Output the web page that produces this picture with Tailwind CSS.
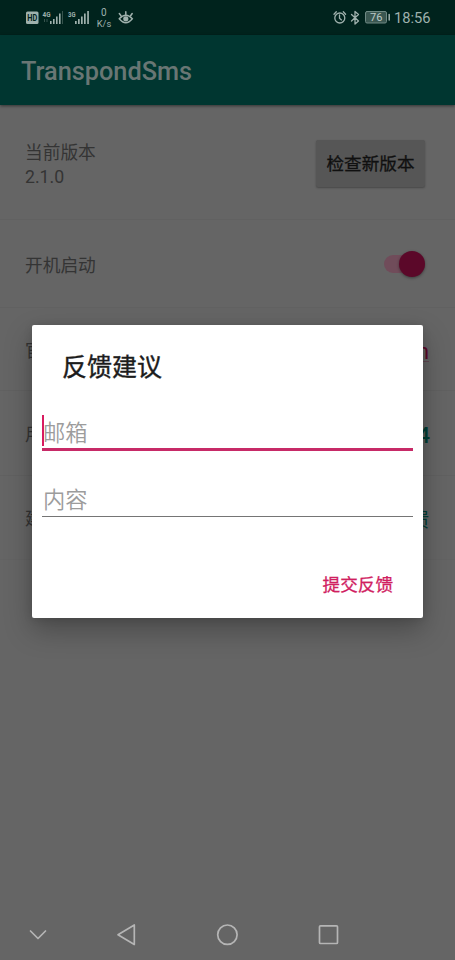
<!DOCTYPE html>
<html lang="zh-CN">
<head>
<meta charset="utf-8">
<title>TranspondSms</title>
<script src="https://cdn.jsdelivr.net/npm/@tailwindcss/browser@4"></script>
</head>
<body class="bg-[#656565]">
<div class="relative flex h-[960px] w-[455px] flex-col overflow-hidden bg-[#656565] font-['Roboto','Noto_Sans_CJK_SC',sans-serif] text-[#343434]">
  <!-- Status bar -->
  <div class="flex h-[35px] shrink-0 items-center justify-between bg-[#00231d] pr-6 pl-[26px] text-[#9fb1ad]">
    <div class="flex h-full items-center">
      <svg class="h-[35px] w-[110px]" viewBox="26 0 110 35" fill="currentColor">
        <rect x="26" y="11.500" width="12.500" height="12.500" rx="1.500"/>
        <text x="27.300" y="21" font-size="8.500" font-weight="700" fill="#00231d" textLength="10" lengthAdjust="spacingAndGlyphs">HD</text>
        <text x="42.500" y="16.500" font-size="7.500" font-weight="700" textLength="8" lengthAdjust="spacingAndGlyphs">4G</text>
        <path d="M50 21h1.600v3H50zM53 19h1.600v5H53zM56 16.500h1.600V24H56zM59 13.500h1.600V24H59z"/>
        <path d="M62 11h1v13h-1zM44 19h1v3h-1zM46.500 19h1v3h-1z" opacity=".35"/>
        <text x="68" y="16.500" font-size="7.500" font-weight="700" textLength="7.500" lengthAdjust="spacingAndGlyphs">3G</text>
        <path d="M75 21h1.700v3H75zM78 19h1.700v5H78zM81 16.500h1.700V24H81zM84 13.500h1.700V24H84zM87.200 11h1.700v13h-1.700z"/>
        <text x="103.700" y="15.500" font-size="10" text-anchor="middle">0</text>
        <text x="96.700" y="26.800" font-size="9.800" textLength="14.500" lengthAdjust="spacingAndGlyphs">K/s</text>
        <g fill="none" stroke="currentColor" stroke-width="1.500" stroke-linecap="round">
          <path d="M119.300 18.800q6.500-7 13 0q-6.500 8-13 0z"/>
          <path d="M125.800 14.500v-2.800M121 15.800l-1.700-2.300M130.600 15.800l1.600-2.300"/>
        </g>
        <circle cx="125.800" cy="18.800" r="2.600"/>
      </svg>
    </div>
    <div class="flex h-full items-center">
      <svg class="h-[35px] w-[58px]" viewBox="333 0 58 35" fill="none" stroke="currentColor" stroke-width="1.300" stroke-linecap="round">
        <circle cx="339.800" cy="18" r="5"/>
        <path d="M339.500 15v3.300l2 1.600M334 14.300l2.300-2.500M345.600 14.300l-2.300-2.500"/>
        <path d="M351.500 14.500l7 6.500-3.500 3V11.500l3.500 3-7 6.500" stroke-linejoin="round"/>
        <rect x="365.500" y="11.500" width="21" height="11.500" rx="1.500" fill="#3a5751" stroke="#6f8984" stroke-width="1"/>
        <path d="M389.200 14.500v5.500" stroke-width="1.500"/>
        <text x="370" y="21.300" font-size="11" fill="#bccac7" stroke="none" textLength="12.500" lengthAdjust="spacingAndGlyphs">76</text>
      </svg>
      <span class="ml-[3px] w-[37px] pt-px text-[14.7px] leading-[35px] whitespace-nowrap">18:56</span>
    </div>
  </div>
  <!-- Toolbar -->
  <header class="z-[1] flex h-[70px] shrink-0 items-center bg-[#003630] pt-[3px] pl-[21px] text-[25.3px] font-medium text-[#697674] shadow-[0_1px_3px_rgba(0,0,0,.5)]">TranspondSms</header>
  <!-- Settings -->
  <main class="flex flex-col text-[17.7px]">
    <section class="flex h-[115px] items-center justify-between border-b border-[#616161] pr-[30px] pl-[25px]">
      <div class="pt-[6px] leading-6">当前版本<br>2.1.0</div>
      <button class="mt-[3px] h-[47px] w-[109px] rounded-[2px] bg-[#565656] pt-[2px] text-[17.6px] text-[#101010] [-webkit-text-stroke:0.3px] shadow-[0_1px_2px_rgba(0,0,0,.3)]">检查新版本</button>
    </section>
    <section class="flex h-[88px] items-center justify-between border-b border-[#616161] pr-[30px] pl-[25px]">
      <span class="pt-[5px]">开机启动</span>
      <div class="flex h-[18px] w-[41px] items-center justify-end rounded-full bg-[#704c5a]"><div class="size-[26px] shrink-0 rounded-full bg-[#5b0829] shadow-[0_1px_3px_rgba(0,0,0,.4)]"></div></div>
    </section>
    <section class="flex h-[83px] items-center justify-between border-b border-[#616161] pr-[26px] pl-[25px]">
      <span class="pt-1">官网</span><span class="pt-1 text-[22px] text-[#5b0829] underline decoration-[#5b0829]/30 decoration-1 underline-offset-2">com</span>
    </section>
    <section class="flex h-[85px] items-center justify-between border-b border-[#616161] pr-[25px] pl-[25px]">
      <span class="pt-1">用户</span><span class="pt-1 text-[22px] font-medium text-[#003f35]">4</span>
    </section>
    <section class="flex h-[84px] items-center justify-between border-b border-[#636363] pr-[26px] pl-[25px]">
      <span class="pt-1">建议</span><span class="pt-1 text-[20px] text-[#003f35]">反馈</span>
    </section>
  </main>
  <!-- Navigation bar -->
  <nav class="mt-auto h-[50px]">
    <svg class="h-[50px] w-[455px]" viewBox="0 910 455 50" fill="none" stroke="#b5b5b5" stroke-width="1.700" stroke-linecap="round" stroke-linejoin="round">
      <path d="M30.500 931l7.500 7.500 7.500-7.500M134.300 925v19.500L118 934.700z"/>
      <circle cx="227.400" cy="934.700" r="9.700"/>
      <rect x="319.500" y="925.800" width="18" height="17.700" rx="1"/>
    </svg>
  </nav>
  <!-- Feedback dialog -->
  <div class="absolute top-[325px] left-[32px] z-10 flex h-[293px] w-[391px] flex-col rounded-[2px] bg-white px-[10px] shadow-[0_12px_28px_rgba(0,0,0,.28),0_1px_8px_rgba(0,0,0,.12)]">
    <h2 class="mt-[26px] pl-5 text-[25px] leading-[34px] font-normal text-[#1c1c1c] [-webkit-text-stroke:0.4px]">反馈建议</h2>
    <div class="mt-[29px] flex h-[37px] items-start border-b-[3px] border-[#c72a67] text-[22.3px] leading-[38px] font-[350] text-[#9c9c9c]">
      <span class="-mr-[2px] mt-px h-[31px] w-[2px] shrink-0 bg-[#d81b60]"></span><span class="pl-px">邮箱</span>
    </div>
    <div class="mt-[30px] h-[36px] border-b border-[#757575] pl-px text-[22.3px] leading-[39px] font-[350] text-[#9c9c9c]">内容</div>
    <button class="mt-[55px] mr-5 self-end text-[17.6px] leading-[26px] text-[#d02060] [-webkit-text-stroke:0.3px]">提交反馈</button>
  </div>
</div>
</body>
</html>
